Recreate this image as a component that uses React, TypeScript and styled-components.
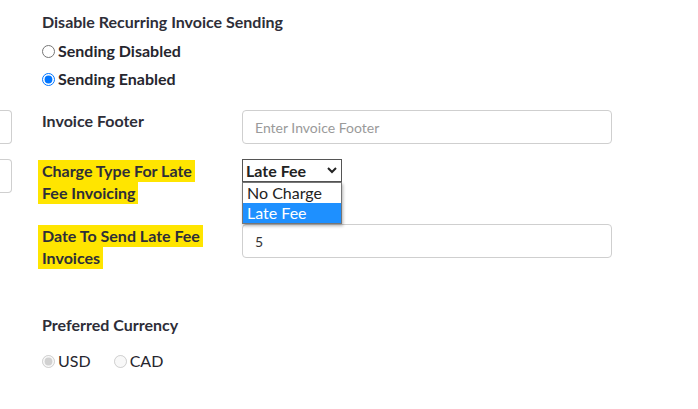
import React from "react";
import styled, { createGlobalStyle } from "styled-components";

const Global = createGlobalStyle`
  html, body { margin: 0; padding: 0; background: #fff; }
  body { font-family: Lato, "Open Sans", sans-serif; color: #2e2e38; }
  * { box-sizing: border-box; }
`;

const Page = styled.div`
  display: flex;
  width: 698px;
  height: 409px;
  overflow: hidden;
`;

const StubColumn = styled.div`
  width: 12px;
  padding-top: 110px;
  display: flex;
  flex-direction: column;
  gap: 15px;
`;

const StubInput = styled.div`
  width: 12px;
  height: 34px;
  border: 1px solid #cfcfcf;
  border-left: none;
  border-radius: 0 4px 4px 0;
`;

const Main = styled.div`
  padding: 12px 0 0 30px;
  display: flex;
  flex-direction: column;
`;

const Title = styled.div`
  font-size: 16px;
  line-height: 20px;
  font-weight: 700;
`;

const RadioList = styled.div<{ $row?: boolean }>`
  display: flex;
  flex-direction: ${(p) => (p.$row ? "row" : "column")};
  gap: ${(p) => (p.$row ? "23px" : "8px")};
  margin-top: ${(p) => (p.$row ? "16px" : "9px")};
`;

const RadioLabel = styled.label<{ $bold?: boolean }>`
  display: flex;
  align-items: center;
  font-size: 16px;
  line-height: 20px;
  font-weight: ${(p) => (p.$bold ? 700 : 400)};
  color: #26262e;
`;

const Radio = styled.input`
  width: 13px;
  height: 13px;
  margin: 1px 3px 0 0;
`;

const Grid = styled.div`
  display: grid;
  grid-template-columns: 200px 370px;
  margin-top: 21px;
`;

const FieldRow = styled.div<{ $gap: number }>`
  display: contents;
  & > * { margin-top: ${(p) => p.$gap}px; }
`;

const Label = styled.div<{ $lh: number }>`
  font-size: 16px;
  line-height: ${(p) => p.$lh}px;
  font-weight: 700;
  padding-top: 1px;
`;

const Highlight = styled.span`
  display: block;
  width: fit-content;
  background: #ffe500;
  margin-left: -4px;
  padding: 0 3px 0 4px;
`;

const TextInput = styled.div<{ $placeholder?: boolean }>`
  height: 34px;
  border: 1px solid #cfcfcf;
  border-radius: 4px;
  padding: 0 12px;
  display: flex;
  align-items: center;
  font-size: 14px;
  color: ${(p) => (p.$placeholder ? "#9a9a9a" : "#333")};
`;

const SelectWrap = styled.div`
  position: relative;
  width: 100px;
  height: 23px;
`;

const SelectBox = styled.div`
  width: 100px;
  height: 23px;
  border: 1px solid #555;
  background: #fff;
  display: flex;
  align-items: center;
  justify-content: space-between;
  padding: 0 4px 0 3px;
  font-size: 16px;
  font-weight: 700;
  color: #222;
`;

const Dropdown = styled.ul`
  position: absolute;
  top: 23px;
  left: 0;
  width: 100px;
  margin: 0;
  padding: 0;
  list-style: none;
  background: #fff;
  border: 1px solid #767676;
  box-shadow: 1px 2px 3px rgba(0, 0, 0, 0.3);
  z-index: 2;
`;

const Option = styled.li<{ $active?: boolean }>`
  height: 20px;
  line-height: 20px;
  padding-left: 4px;
  font-size: 16px;
  color: ${(p) => (p.$active ? "#fff" : "#222")};
  background: ${(p) => (p.$active ? "#1e90ff" : "transparent")};
`;

const SectionLabel = styled.div`
  font-size: 16px;
  line-height: 20px;
  font-weight: 700;
  margin-top: 46px;
`;

export default function App() {
  return (
    <>
      <Global />
      <Page>
        <StubColumn>
          <StubInput />
          <StubInput />
        </StubColumn>
        <Main>
          <Title>Disable Recurring Invoice Sending</Title>
          <RadioList>
            <RadioLabel $bold>
              <Radio type="radio" name="sending" />
              Sending Disabled
            </RadioLabel>
            <RadioLabel $bold>
              <Radio type="radio" name="sending" defaultChecked />
              Sending Enabled
            </RadioLabel>
          </RadioList>
          <Grid>
            <FieldRow $gap={0}>
              <Label $lh={20}>Invoice Footer</Label>
              <TextInput $placeholder>Enter Invoice Footer</TextInput>
            </FieldRow>
            <FieldRow $gap={15}>
              <Label $lh={22}>
                <Highlight>Charge Type For Late</Highlight>
                <Highlight>Fee Invoicing</Highlight>
              </Label>
              <div>
                <SelectWrap>
                  <SelectBox>
                    Late Fee
                    <svg width="10" height="7" viewBox="0 0 10 7">
                      <polyline points="1,1 5,5 9,1" fill="none" stroke="#222" strokeWidth="2" />
                    </svg>
                  </SelectBox>
                  <Dropdown>
                    <Option>No Charge</Option>
                    <Option $active>Late Fee</Option>
                  </Dropdown>
                </SelectWrap>
              </div>
            </FieldRow>
            <FieldRow $gap={20}>
              <Label $lh={22}>
                <Highlight>Date To Send Late Fee</Highlight>
                <Highlight>Invoices</Highlight>
              </Label>
              <TextInput>5</TextInput>
            </FieldRow>
          </Grid>
          <SectionLabel>Preferred Currency</SectionLabel>
          <RadioList $row>
            <RadioLabel>
              <Radio type="radio" name="cur" defaultChecked disabled />
              USD
            </RadioLabel>
            <RadioLabel>
              <Radio type="radio" name="cur" disabled />
              CAD
            </RadioLabel>
          </RadioList>
        </Main>
      </Page>
    </>
  );
}
